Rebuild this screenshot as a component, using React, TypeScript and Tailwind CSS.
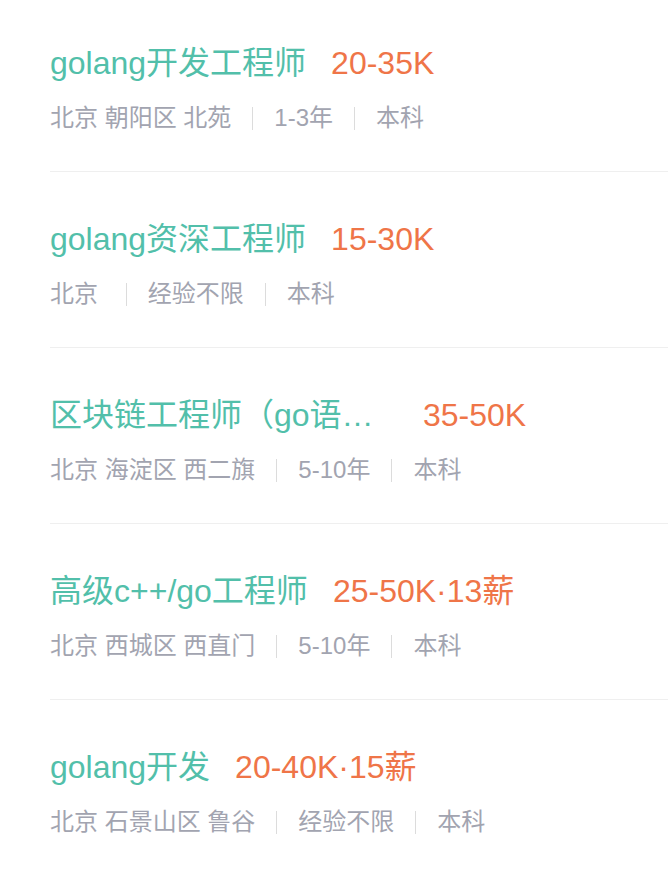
const jobs = [
  {
    title: "golang开发工程师",
    salary: "20-35K",
    meta: ["北京 朝阳区 北苑", "1-3年", "本科"],
  },
  {
    title: "golang资深工程师",
    salary: "15-30K",
    meta: ["北京 ", "经验不限", "本科"],
  },
  {
    title: "区块链工程师（go语言）",
    salary: "35-50K",
    meta: ["北京 海淀区 西二旗", "5-10年", "本科"],
  },
  {
    title: "高级c++/go工程师",
    salary: "25-50K·13薪",
    meta: ["北京 西城区 西直门", "5-10年", "本科"],
  },
  {
    title: "golang开发",
    salary: "20-40K·15薪",
    meta: ["北京 石景山区 鲁谷", "经验不限", "本科"],
  },
];

export default function App() {
  return (
    <div
      className="min-h-screen bg-white pl-[50px]"
      style={{ fontFamily: '"Liberation Sans", "Noto Sans CJK SC", sans-serif' }}
    >
      {jobs.map((job, i) => (
        <div
          key={i}
          className="border-b border-[#efefef] pt-[45px] pb-[37px] first:pt-[41px]"
        >
          {/* title + salary */}
          <div className="flex items-center h-[44px] text-[32px] leading-[44px]">
            <span className="max-w-[348px] truncate text-[#52bfaa]">{job.title}</span>
            <span className="ml-[25px] shrink-0 text-[#ef7548]">{job.salary}</span>
          </div>

          {/* location | experience | degree */}
          <div className="mt-[17px] flex items-center h-[32px] text-[24px] leading-[32px] text-[#a2a4b0]">
            {job.meta.map((m, j) => (
              <span key={j} className="flex items-center">
                {j > 0 && <span className="mx-[21px] h-[23px] w-px bg-[#dcdcdc]" />}
                <span className="whitespace-pre">{m}</span>
              </span>
            ))}
          </div>
        </div>
      ))}
    </div>
  );
}
